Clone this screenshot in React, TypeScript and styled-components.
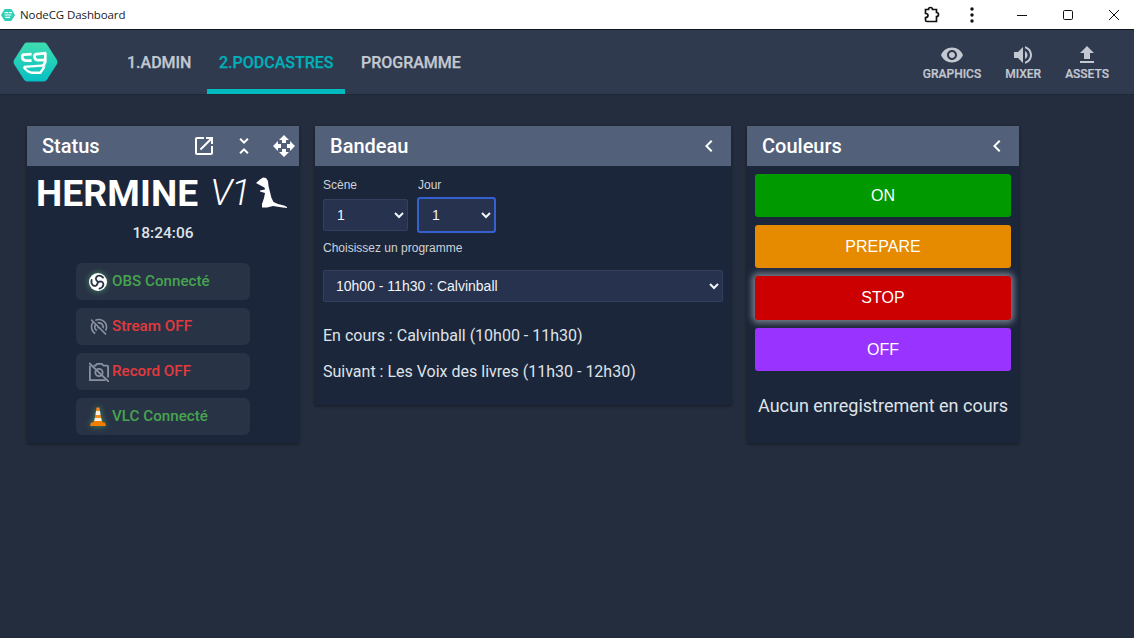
import React from "react";
import styled, { createGlobalStyle } from "styled-components";

const Global = createGlobalStyle`
  html, body { margin: 0; padding: 0; height: 100%; background: #242d3d; overflow: hidden; }
  #root { height: 638px; }
  * { box-sizing: border-box; }
`;

const Page = styled.div`
  width: 1134px; height: 638px; display: flex; flex-direction: column;
  background: #242d3d; font-family: Roboto, sans-serif; color: #fff;
`;
const TitleBar = styled.div`
  height: 30px; flex: none; background: #fff; border-bottom: 1px solid #10141c;
  display: flex; align-items: center; padding-left: 1px; color: #222;
`;
const TitleText = styled.span`
  font: 400 11.5px "Open Sans", sans-serif; margin-left: 5px; letter-spacing: -0.1px;
`;
const WinControls = styled.div`
  margin-left: auto; display: flex; align-items: center; height: 100%;
`;
const WinBtn = styled.div<{ $w: number }>`
  width: ${p => p.$w}px; height: 100%; display: flex; align-items: center; justify-content: center;
`;
const NavBar = styled.div`
  height: 64px; flex: none; background: #2f3a4f; display: flex; align-items: stretch;
  box-shadow: 0 1px 0 #1f2838;
`;
const LogoWrap = styled.div`
  width: 115px; flex: none; padding: 12px 0 0 13px;
`;
const Tabs = styled.div`
  display: flex; flex: 1;
`;
const Tab = styled.div<{ $active?: boolean }>`
  height: 64px; padding: 5px 12px 0; margin-right: 3.5px; display: flex; align-items: center;
  font: 500 16px Roboto, sans-serif; -webkit-text-stroke: 0.25px currentColor;
  color: ${p => (p.$active ? "#00b0b9" : "#c3c8d1")};
  border-bottom: 5px solid ${p => (p.$active ? "#00b9bf" : "transparent")};
`;
const ActionGroup = styled.div`
  display: flex; padding-right: 25px; gap: 24px; padding-top: 13px;
`;
const Action = styled.div`
  display: flex; flex-direction: column; align-items: center; gap: 0;
  font: 500 12px Roboto, sans-serif; color: #c3c8d1; line-height: 14px;
  -webkit-text-stroke: 0.2px currentColor;
`;
const Content = styled.div`
  flex: 1; display: flex; align-items: flex-start; gap: 16px; padding: 32px 27px;
`;
const Panel = styled.section<{ $w: number; $h: number }>`
  width: ${p => p.$w}px; height: ${p => p.$h}px; flex: none; background: #1c263a;
  box-shadow: 0 1px 3px rgba(0,0,0,.45);
`;
const PanelHead = styled.div`
  height: 40px; background: #52607a; display: flex; align-items: center; padding: 0 0 0 15px;
  font: 500 20px Roboto, sans-serif; color: #fff;
`;
const HeadIcons = styled.div`
  margin-left: auto; display: flex; align-items: center;
`;
const HeadBtn = styled.div<{ $w?: number; $after?: number }>`
  width: ${p => p.$w ?? 40}px; height: 40px; flex: none; display: flex; align-items: center; justify-content: center;
  margin-right: ${p => p.$after ?? 0}px;
`;
const StatusBody = styled.div`
  display: flex; flex-direction: column; align-items: center;
`;
const Brand = styled.div`
  height: 52px; width: 100%; padding: 1px 0 0 9px; display: flex; align-items: center;
`;
const BrandName = styled.span`
  font: 700 37.2px/40px Roboto, sans-serif; letter-spacing: 0.1px;
`;
const BrandVersion = styled.span`
  font: italic 300 37px/40px Roboto, sans-serif; margin-left: 12px; letter-spacing: -1.5px;
`;
const RatSlot = styled.div`
  width: 38px; height: 38px; flex: none; margin-left: 1px; display: flex;
`;
const Clock = styled.div`
  font: 500 15.5px/20px Roboto, sans-serif; color: #dfe3e8; margin-top: 5px; margin-bottom: 20px;
`;
const Chip = styled.div`
  width: 174px; height: 37px; margin-bottom: 8px; background: #293346; border-radius: 6px;
  display: flex; align-items: center; padding-left: 13px; gap: 3px;
`;
const ChipText = styled.span<{ $ok?: boolean }>`
  font: 500 15.2px Roboto, sans-serif; margin-top: -2px; color: ${p => (p.$ok ? "#46a44e" : "#e23a3d")};
`;
const IconSlot = styled.div<{ $glow?: boolean }>`
  width: 20px; height: 20px; flex: none; display: flex;
  ${p => p.$glow && "filter: drop-shadow(0 0 3px rgba(90,220,120,.55));"}
`;
const BandeauBody = styled.div`
  padding: 12px 8px 0;
`;
const Row = styled.div`
  display: flex; gap: 9px;
`;
const Field = styled.div`
  display: flex; flex-direction: column;
`;
const Label = styled.label`
  font: 400 12px/14px "Liberation Sans", Arial, sans-serif; color: #cdd2d9; margin-bottom: 7px;
`;
const JourLabel = styled(Label)`
  margin-left: 1px;
`;
const Select = styled.select<{ $w: number; $focus?: boolean }>`
  width: ${p => p.$w}px; height: ${p => (p.$focus ? 36 : 32)}px; color-scheme: dark;
  margin-top: ${p => (p.$focus ? -2 : 0)}px;
  background: #26324e; color: #f2f4f7; outline: none;
  border: ${p => (p.$focus ? "2px solid #3560d0" : "1px solid #333f5c")};
  border-radius: ${p => (p.$focus ? 3 : 2)}px; padding: 0 9px;
  font: 400 14px "Liberation Sans", Arial, sans-serif;
`;
const ProgramSelect = styled(Select)`
  padding: 0 8px;
`;
const ProgLabel = styled(Label)`
  display: block; margin-top: 8px; margin-bottom: 15px;
`;
const Info = styled.p`
  font: 400 16px/20px Roboto, sans-serif; color: #dfe3e8; margin: 0 0 16px;
`;
const InfoBlock = styled.div`
  margin-top: 24px;
`;
const ColorBody = styled.div`
  padding: 8px 8px 0; display: flex; flex-direction: column; gap: 8px;
`;
const ColorBtn = styled.button<{ $bg: string; $glow?: boolean; $h?: number }>`
  height: ${p => p.$h ?? 43}px; border: 0; border-radius: 3px; background: ${p => p.$bg};
  color: #fff; font: 400 16px "Liberation Sans", Arial, sans-serif; padding: 0;
  ${p => p.$glow && "box-shadow: 0 0 6px 3px rgba(255,255,255,.4);"}
`;
const Recording = styled.div`
  font: 400 18px Roboto, sans-serif; color: #dfe3e8; text-align: center; white-space: nowrap; margin-top: 16px;
`;

const Ico = ({ d, s = 24, c = "#fff" }: { d: string; s?: number; c?: string }) => (
  <svg width={s} height={s} viewBox="0 0 24 24" fill={c}><path d={d} /></svg>
);

const Logo = () => (
  <svg width="45" height="40" viewBox="0 0 46 40">
    <defs>
      <linearGradient id="lg" x1="0" y1="0" x2="0" y2="1">
        <stop offset="0" stopColor="#3fdcb0" />
        <stop offset="1" stopColor="#06c0c4" />
      </linearGradient>
    </defs>
    <path d="M11.5 1.5 Q12.5 0 14.5 0 H31.5 Q33.5 0 34.5 1.5 L45 18 Q46 20 45 22 L34.5 38.5 Q33.5 40 31.5 40 H14.5 Q12.5 40 11.5 38.5 L1 22 Q0 20 1 18 Z" fill="url(#lg)" />
    <g fill="none" stroke="#fff" strokeWidth="2.8" strokeLinejoin="round">
      <path d="M19 12 L11 12.5 Q9 13 9.5 15.5 Q10 18.5 13 18.5 H19" />
      <path d="M34 11 L24 12 Q21.5 12.5 22 15 Q22.5 18 25 18 H33" />
      <path d="M33 11 V20 L30 25" />
      <path d="M11 25 L33 23.5" strokeWidth="2.2" />
      <path d="M11 25 Q15 31 20 31 H28 L32 25" strokeWidth="2.4" />
    </g>
  </svg>
);

const Rat = () => (
  <svg width="38" height="38" viewBox="0 2 38 38">
    <path fill="#fff" d="M6 11 L10 7.5 L13 5.5 L16 6 L18 9 L18.5 14 L20 20 L21.5 26 L23.5 30 L28 32 L34 33.5 L37 35 L37 36 L31 35.2 L23 34 L17 35.5 L12 35.5 L12 32 L14 26 L15 21 L10 19.5 L10 18.5 L15 17.5 L14.5 15.5 L11.5 14 Z" />
  </svg>
);

const Obs = () => (
  <svg width="20" height="20" viewBox="0 0 20 20">
    <circle cx="9" cy="10" r="9" fill="#fff" />
    <g fill="none" stroke="#2b3346" strokeWidth="1.8" strokeLinecap="round">
      <path d="M9 10 Q5 6.5 8.5 4 Q11.5 3 14 5.5" />
      <path d="M9 10 Q5 6.5 8.5 4 Q11.5 3 14 5.5" transform="rotate(120 9 10)" />
      <path d="M9 10 Q5 6.5 8.5 4 Q11.5 3 14 5.5" transform="rotate(240 9 10)" />
    </g>
  </svg>
);

const Vlc = () => (
  <svg width="20" height="20" viewBox="0 0 20 20">
    <path d="M7.5 0.5 H10.5 L11 4 H7 Z" fill="#f08a1c" />
    <path d="M7 4 H11 L11.6 8 H6.4 Z" fill="#f5f0e6" />
    <path d="M6.4 8 H11.6 L12.2 11 H5.8 Z" fill="#f08a1c" />
    <path d="M5.8 11 H12.2 L12.8 14 H5.2 Z" fill="#f5f0e6" />
    <path d="M5 14 H13 L14 15.5 H16 L17 19 H1 L2 15.5 H4 Z" fill="#f07c00" />
  </svg>
);

const NoPhoto = () => (
  <svg width="20" height="20" viewBox="1 1 22 22" fill="none" stroke="#8a92a1" strokeWidth="2">
    <path d="M6 5 H8 L10 3 H15 L17 5 H21 A1 1 0 0 1 22 6 V18" />
    <path d="M2 5 V21 H19" />
    <circle cx="12" cy="12.5" r="4" />
    <path d="M1 2 L23 23" />
  </svg>
);

const P = {
  eye: "M12 4.5C7 4.5 2.73 7.61 1 12c1.73 4.39 6 7.5 11 7.5s9.27-3.11 11-7.5c-1.73-4.39-6-7.5-11-7.5zM12 17c-2.76 0-5-2.24-5-5s2.24-5 5-5 5 2.24 5 5-2.24 5-5 5zm0-8c-1.66 0-3 1.34-3 3s1.34 3 3 3 3-1.34 3-3-1.34-3-3-3z",
  vol: "M3 9v6h4l5 5V4L7 9H3zm13.5 3c0-1.77-1.02-3.29-2.5-4.03v8.05c1.48-.73 2.5-2.25 2.5-4.02zM14 3.23v2.06c2.89.86 5 3.54 5 6.71s-2.11 5.85-5 6.71v2.06c4.01-.91 7-4.49 7-8.77s-2.99-7.86-7-8.77z",
  up: "M9 16h6v-6h4l-7-7-7 7h4zm-4 2h14v2H5z",
  open: "M19 19H5V5h7V3H5c-1.11 0-2 .9-2 2v14c0 1.1.89 2 2 2h14c1.1 0 2-.9 2-2v-7h-2v7zM14 3v2h3.59l-9.83 9.83 1.41 1.41L19 6.41V10h2V3h-7z",
  move: "M10 9h4V6h3l-5-5-5 5h3v3zm-1 1H6V7l-5 5 5 5v-3h3v-4zm14 2l-5-5v3h-3v4h3v3l5-5zm-9 3h-4v3H7l5 5 5-5h-3v-3z",
  fold: "M7.41 18.59L8.83 20 12 16.83 15.17 20l1.41-1.41L12 14l-4.59 4.59zm9.18-13.18L15.17 4 12 7.17 8.83 4 7.41 5.41 12 10l4.59-4.59z",
  left: "M15.41 7.41L14 6l-6 6 6 6 1.41-1.41L10.83 12z",
  noStream: "M17.56 14.24c.28-.69.44-1.45.44-2.24 0-3.31-2.69-6-6-6-.79 0-1.55.16-2.24.44l1.62 1.62c.2-.03.41-.06.62-.06 2.21 0 4 1.79 4 4 0 .21-.02.42-.05.63l1.61 1.61zM12 4c4.42 0 8 3.58 8 8 0 1.35-.35 2.62-.95 3.74l1.47 1.47C21.46 15.69 22 13.91 22 12c0-5.52-4.48-10-10-10-1.91 0-3.69.55-5.21 1.47l1.46 1.46C9.37 4.34 10.65 4 12 4zM3.27 2.5L2 3.77l2.1 2.1C2.79 7.57 2 9.69 2 12c0 3.7 2.01 6.92 4.99 8.65l1-1.73C5.61 17.53 4 14.96 4 12c0-1.76.57-3.38 1.53-4.69l1.43 1.44C6.36 9.68 6 10.8 6 12c0 2.22 1.21 4.15 3 5.19l1-1.74c-1.19-.7-2-1.97-2-3.45 0-.65.17-1.25.44-1.79l1.58 1.58L10 12c0 1.1.9 2 2 2l.21-.02.01.01 7.51 7.51L21 20.23 4.27 3.5l-1-1z",
};

export default function App() {
  return (
    <Page>
      <Global />
      <TitleBar>
        <svg width="14" height="14" viewBox="0 0 46 40"><path d="M12 0 H34 L46 20 L34 40 H12 L0 20 Z" fill="#2ccfb8" /><path d="M12 12 H24 M26 12 H36 M12 20 H34 M14 28 H30" stroke="#fff" strokeWidth="4" /></svg>
        <TitleText>NodeCG Dashboard</TitleText>
        <WinControls>
          <WinBtn $w={18}>
            <svg width="18" height="18" viewBox="0 0 18 18" fill="none" stroke="#111" strokeWidth="1.7"><path d="M1.5 3.5 H4.5 A2 2 0 0 1 8.5 3.5 H12.5 V6.5 A2 2 0 0 1 12.5 10.5 V15.5 H3 Q1.5 15.5 1.5 14 V11.5 Q4 11.5 4 9.5 Q4 7.5 1.5 7.5 Z" /></svg>
          </WinBtn>
          <WinBtn $w={60}>
            <svg width="4" height="16" viewBox="0 0 4 16" fill="#111"><circle cx="2" cy="2" r="1.7" /><circle cx="2" cy="8" r="1.7" /><circle cx="2" cy="14" r="1.7" /></svg>
          </WinBtn>
          <WinBtn $w={40}>
            <svg width="10" height="10" viewBox="0 0 10 10"><path d="M0 5.5 H10" stroke="#111" /></svg>
          </WinBtn>
          <WinBtn $w={52}>
            <svg width="10" height="10" viewBox="0 0 10 10"><rect x=".5" y=".5" width="9" height="9" rx="1.2" fill="none" stroke="#111" /></svg>
          </WinBtn>
          <WinBtn $w={40}>
            <svg width="10" height="10" viewBox="0 0 10 10"><path d="M0 0 L10 10 M10 0 L0 10" stroke="#111" /></svg>
          </WinBtn>
        </WinControls>
      </TitleBar>
      <NavBar>
        <LogoWrap><Logo /></LogoWrap>
        <Tabs>
          <Tab>1.ADMIN</Tab>
          <Tab $active>2.PODCASTRES</Tab>
          <Tab>PROGRAMME</Tab>
        </Tabs>
        <ActionGroup>
          <Action><Ico d={P.eye} c="#c3c8d1" />GRAPHICS</Action>
          <Action><Ico d={P.vol} c="#c3c8d1" />MIXER</Action>
          <Action><Ico d={P.up} c="#c3c8d1" />ASSETS</Action>
        </ActionGroup>
      </NavBar>
      <Content>
        <Panel $w={272} $h={317}>
          <PanelHead>
            Status
            <HeadIcons>
              <HeadBtn><Ico d={P.open} /></HeadBtn>
              <HeadBtn $after={5}><Ico d={P.fold} /></HeadBtn>
              <HeadBtn $w={30}><Ico d={P.move} /></HeadBtn>
            </HeadIcons>
          </PanelHead>
          <StatusBody>
            <Brand>
              <BrandName>HERMINE</BrandName>
              <BrandVersion>V1</BrandVersion>
              <RatSlot><Rat /></RatSlot>
            </Brand>
            <Clock>18:24:06</Clock>
            <Chip><IconSlot $glow><Obs /></IconSlot><ChipText $ok>OBS Connecté</ChipText></Chip>
            <Chip><IconSlot><Ico d={P.noStream} s={20} c="#8a92a1" /></IconSlot><ChipText>Stream OFF</ChipText></Chip>
            <Chip><IconSlot><NoPhoto /></IconSlot><ChipText>Record OFF</ChipText></Chip>
            <Chip><IconSlot $glow><Vlc /></IconSlot><ChipText $ok>VLC Connecté</ChipText></Chip>
          </StatusBody>
        </Panel>
        <Panel $w={416} $h={279}>
          <PanelHead>
            Bandeau
            <HeadIcons><HeadBtn $w={44}><Ico d={P.left} /></HeadBtn></HeadIcons>
          </PanelHead>
          <BandeauBody>
            <Row>
              <Field>
                <Label>Scène</Label>
                <Select $w={85} defaultValue="1"><option>1</option></Select>
              </Field>
              <Field>
                <JourLabel>Jour</JourLabel>
                <Select $w={79} $focus defaultValue="1"><option>1</option></Select>
              </Field>
            </Row>
            <ProgLabel>Choisissez un programme</ProgLabel>
            <ProgramSelect $w={400} defaultValue="a"><option value="a">10h00 - 11h30 : Calvinball</option></ProgramSelect>
            <InfoBlock>
              <Info>En cours : Calvinball (10h00 - 11h30)</Info>
              <Info>Suivant : Les Voix des livres (11h30 - 12h30)</Info>
            </InfoBlock>
          </BandeauBody>
        </Panel>
        <Panel $w={272} $h={317}>
          <PanelHead>
            Couleurs
            <HeadIcons><HeadBtn $w={44}><Ico d={P.left} /></HeadBtn></HeadIcons>
          </PanelHead>
          <ColorBody>
            <ColorBtn $bg="#009900">ON</ColorBtn>
            <ColorBtn $bg="#e68a00">PREPARE</ColorBtn>
            <ColorBtn $bg="#cc0000" $glow $h={44}>STOP</ColorBtn>
            <ColorBtn $bg="#9933ff">OFF</ColorBtn>
            <Recording>Aucun enregistrement en cours</Recording>
          </ColorBody>
        </Panel>
      </Content>
    </Page>
  );
}
